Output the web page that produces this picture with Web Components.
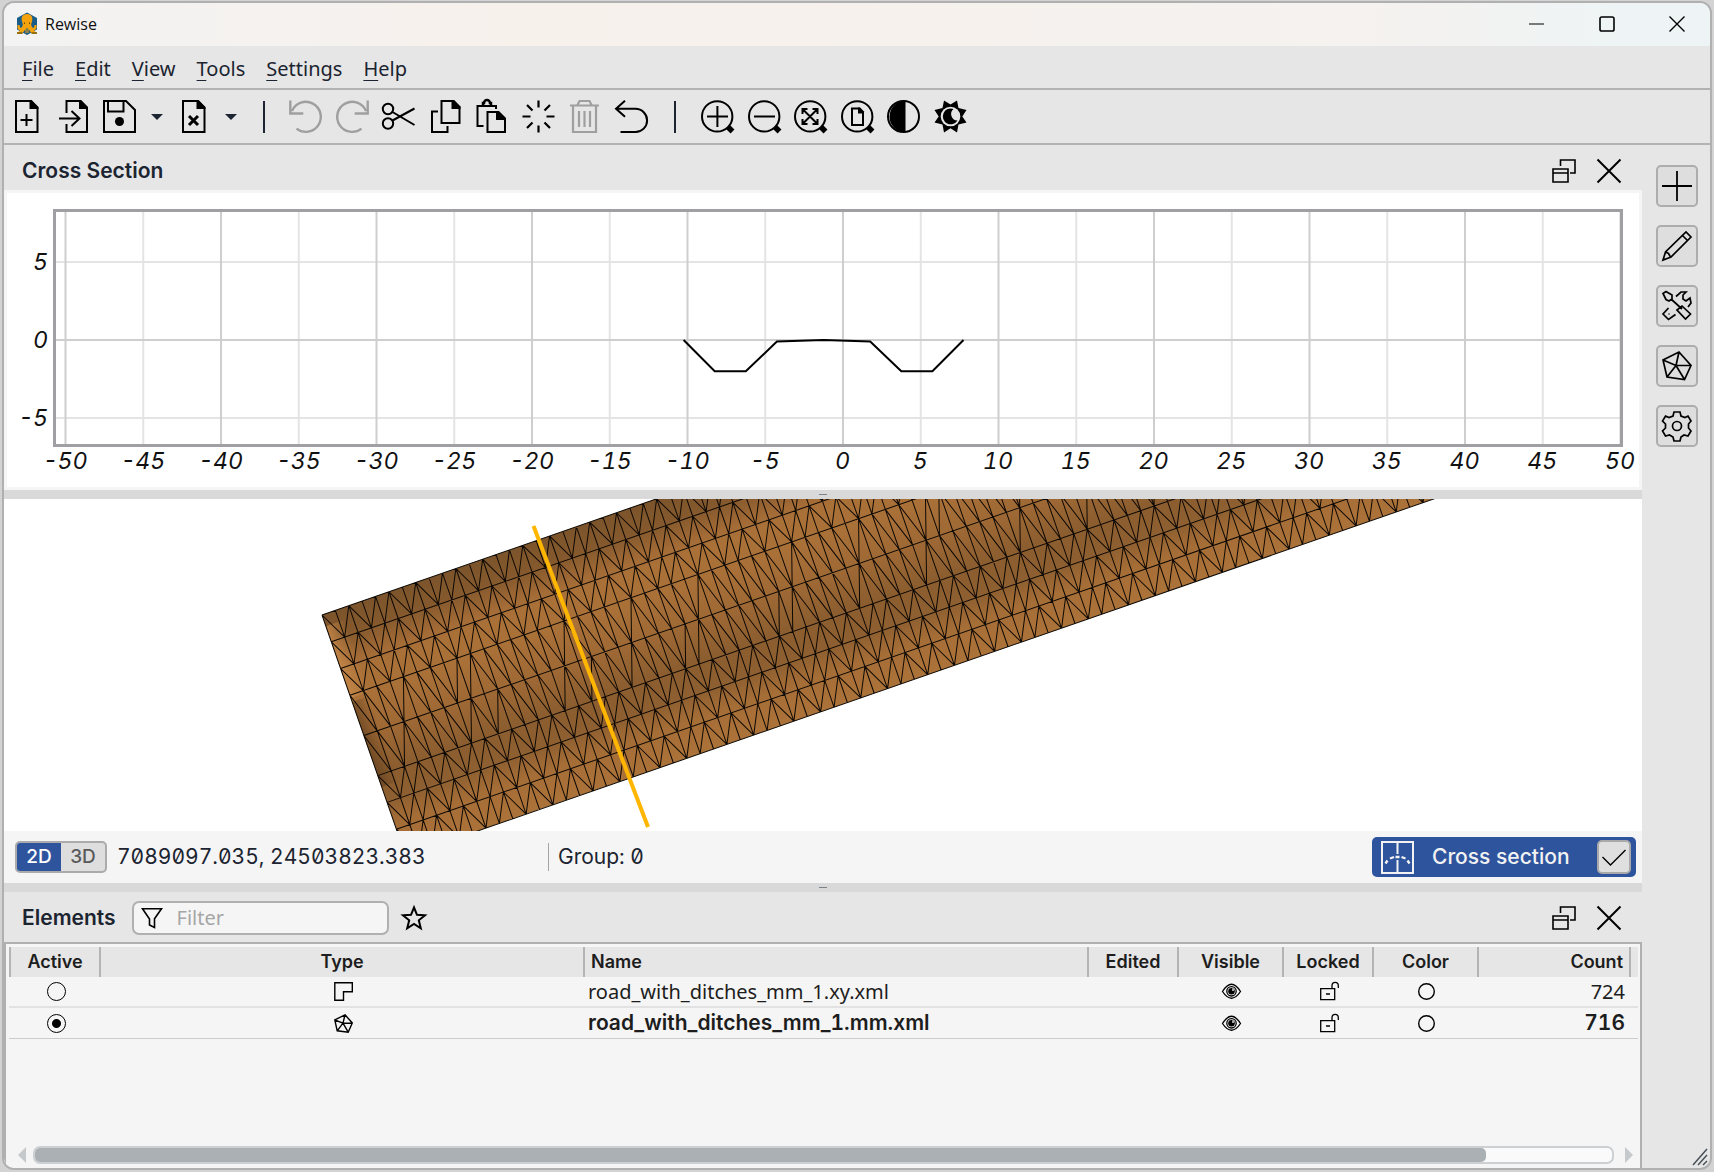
<!DOCTYPE html>
<html lang="en">
<head>
<meta charset="utf-8">
<title>Rewise</title>
<style>
html, body {
    margin: 0;
    height: 100%;
}
body {
    background: #d3d3d3;
    color: #1b2430;
    font: 21px/24px Inter, "Noto Sans", sans-serif;
}
</style>
</head>
<body>
<app-window>
    <title-bar slot="top">Rewise</title-bar>
    <menu-bar slot="top"></menu-bar>
    <tool-bar slot="top"></tool-bar>

    <dock-panel heading="Cross Section">
        <section-plot></section-plot>
    </dock-panel>
    <split-handle></split-handle>
    <mesh-view></mesh-view>
    <status-bar></status-bar>
    <split-handle></split-handle>
    <dock-panel heading="Elements">
        <filter-box slot="tools"></filter-box>
        <element-table></element-table>
    </dock-panel>

    <side-bar slot="side"></side-bar>
</app-window>

<script>
const base = `
:host, * { box-sizing: border-box; }
button {
    border: 0;
    padding: 0;
    margin: 0;
    background: none;
    color: inherit;
    font: inherit;
    display: flex;
    align-items: center;
    justify-content: center;
}
`

function define(name, style, html, setup) {
    const template = document.createElement('template')
    template.innerHTML = `<style>${base}${style}</style>${html}`
    customElements.define(name, class extends HTMLElement {
        constructor() {
            super()
            this.attachShadow({ mode: 'open' }).appendChild(template.content.cloneNode(true))
        }
        connectedCallback() {
            if (setup) setup(this, this.shadowRoot)
        }
    })
}

// [viewBox size, stroke width, markup]
const lens = '<circle cx="16.2" cy="16.4" r="15.2"/><path d="M27 27l4.500 4.500" stroke-width="5.500"/>'
const icons = {
    'new': [33, 2, '<path d="M6 1h15l6.500 7v24H6z M16.500 14v12M10.500 20h12"/><path d="M19.500 0h2l7 7v2h-9z" fill="#000" stroke="none"/>'],
    'import': [33, 2, '<path d="M9.500 13V1h14l6.500 7v24H9.500v-8 M2 18.500h20 M14.500 11l8 7.500-8 7.500"/><path d="M22 0h2l7 7v2h-9z" fill="#000" stroke="none"/>'],
    'save': [33, 2, '<path d="M1 1h22l9 9v22H1z M5 1v10.500h15.500V1"/><circle cx="16.500" cy="21.500" r="4.500" fill="#000" stroke="none"/>'],
    'close-file': [33, 2, '<path d="M6 1h15l6.500 7v24H6z"/><path d="M12 16l9 9M21 16l-9 9" stroke-width="3"/><path d="M19.500 0h2l7 7v2h-9z" fill="#000" stroke="none"/>'],
    'undo': [33, 2.4, '<path d="M7.500 28.600A15 15 0 1 0 3 11 M1.300 0.500v13h13"/>'],
    'redo': [33, 2.4, '<path d="M25.500 28.600A15 15 0 1 1 30 11 M31.700 0.500v13h-13"/>'],
    'cut': [33, 2, '<circle cx="6" cy="9" r="5.200"/><circle cx="6" cy="23.500" r="5.200"/><path d="M10.500 12L32.500 25M10.500 20.500L32.500 8.500"/>'],
    'copy': [33, 2, '<path d="M9 11.500H3V32h15.500v-6 M12.500 1h12l6 6.500v15.500h-18z"/><path d="M22.500 0h2.500l6.500 6.500v2.500h-9z" fill="#000" stroke="none"/>'],
    'paste': [33, 2, '<path d="M8.500 26H2.500V6H21v3 M12.500 12h11l6.500 6.500V32H12.500z"/><path d="M8 6V3h1a3 3 0 0 1 6 0h1v3" stroke-width="2.500"/><path d="M21 11h2.500l7 7v2H21z" fill="#000" stroke="none"/>'],
    'burst': [33, 2.2, '<path d="M16.500 0.500v7M16.500 25.500v7M0.500 16.500h8M24.500 16.500h8M5 5l5.500 5.500M28 5l-5.500 5.500M5 28l5.500-5.500M28 28l-5.500-5.500"/>'],
    'trash': [33, 2.2, '<path d="M2 5.500h29M5 6v26h23V6M9.500 5l2-4h10l2 4M11 11v16M16.500 11v16M22 11v16"/>'],
    'return': [33, 2, '<path d="M10 0.700L1 8.800l9 8 M1 8.800H20.500a11.600 11.600 0 0 1 0 23.200H5.500"/>'],
    'zoom-in': [33, 2, lens + '<path d="M6 16.500h21M16.400 6v21"/>'],
    'zoom-out': [33, 2, lens + '<path d="M6 16.500h21"/>'],
    'zoom-fit': [33, 2, lens + '<path d="M9 9.500l14 14M23 9.500l-14 14M8.500 14V9h5M18.500 9h5v5M8.500 19v5h5M23.500 19v5h-5"/>'],
    'zoom-page': [33, 2, lens + '<path d="M11 8.500h7.500l3.500 4V25H11z"/><path d="M17 7.500h2l4 4v2h-6z" fill="#000" stroke="none"/>'],
    'contrast': [33, 2, '<circle cx="16.500" cy="16.500" r="15.500"/><path d="M18.500 0.500V32.500A16 16 0 0 1 18.500 0.500z" fill="#000" stroke="none"/>'],
    'sun': [33, 0, '<path d="M10 0.500l6.500 4 6.500-4 1.500 7.500 8 2-4.200 6.500 4.200 6-8 2-1.500 8-6.500-4.200-6.500 4.200-1.500-8-8-2 4.200-6-4.200-6.500 8-2z" fill="#000"/><circle cx="16.500" cy="16.500" r="9.800" fill="#e6e6e6"/><path d="M19.500 9A7.900 7.900 0 1 0 23.500 20.500A6.500 6.500 0 0 1 19.500 9z" fill="#000"/>'],
    'restore': [24, 1.6, '<path d="M1 10h15v13H1zM1 14h15M8.500 7V1H23v13h-5"/>'],
    'close': [24, 2, '<path d="M0.500 0.500l23 23M23.500 0.500l-23 23"/>'],
    'win-min': [16, 1.2, '<path d="M0 8h15"/>'],
    'win-max': [16, 1.6, '<rect x="1" y="1" width="14" height="14" rx="1.800"/>'],
    'win-close': [16, 1.4, '<path d="M0.500 0.500l15 15M15.500 0.500l-15 15"/>'],
    'plus': [30, 1.8, '<path d="M15 0v30M0 15h30"/>'],
    'pencil': [30, 1.7, '<path d="M1 29l2.500-8L24 1l5 5L9 26zM20.500 4.500l5 5M3.500 21l3 1.500L8.500 26"/>'],
    'tools': [30, 1.7, '<path d="M1 2.500l3-2 6 3.500v4l-3 2-3-1.500zM9 8l11 10M15 19l5-4 8.500 8-5 5z M14 5.500L19 1h5l-3 3v4l3 2 4-3 1 5-3 4 M6.500 17L1 23l5.500 5.500 7-5 M6.500 23h1"/>'],
    'mesh': [30, 1.7, '<path d="M17 1L29 14.500 22.500 28.500 5 26 1 9zM14 14.500L17 1M14 14.500h15M14 14.500l8.500 14M14 14.500L5 26M14 14.500L1 9"/>'],
    'mesh-small': [19, 1.4, '<path d="M11 0.800L18.300 9 14.200 18.200 3.200 16.800 0.800 6zM9 9.200L11 0.800M9 9.200H18.300M9 9.200l5.200 9M9 9.200l-5.800 7.600M9 9.200L0.800 6"/>'],
    'gear': [30, 1.7, '<path d="M12 1h6l1 4 4 1.500 3-1.500 3 5-2.500 3v4l2.500 3-3 5-4-1-3 2-1 4h-6l-1-4-3.500-2-4 1-3-5 3-3v-4l-3-3 3-5 3.500 1.500L11 5z"/><circle cx="15" cy="15" r="4.500"/>'],
    'funnel': [20, 1.6, '<path d="M0.500 0.800h19l-7 10V19.500l-5-2.500v-6z"/>'],
    'star': [24, 2, '<path d="M12 1.500l3 7.300 8 .5-6.200 5 2 8L12 18l-6.800 4.300 2-8L1 9.300l8-.5z"/>'],
    'corner': [19, 1.4, '<path d="M0.800 0.800h17.500v9H9.500v8.500H0.800z"/>'],
    'eye': [19, 1.3, '<path d="M0.500 9.500Q9.500-5 18.500 9.500Q9.500 23 0.500 9.500z"/><circle cx="9.500" cy="9.300" r="4.700"/><circle cx="9.500" cy="9.300" r="3.300" fill="#000" stroke="none"/><path d="M11 6.500v2.500" stroke="#fff"/>'],
    'unlock': [19, 1.3, '<path d="M0.700 6.700h14v11h-14zM12 6V3.500a3 3 0 0 1 6.300 0V6M6 12h4"/>'],
    'ring': [19, 1.4, '<circle cx="9.500" cy="9.500" r="7.800"/>'],
    'tick': [24, 1.4, '<path d="M0.500 12l8 8L23.500 5"/>'],
    'section': [33, 2, '<path d="M1 1h31v31H1zM16.500 1v12M16.500 19v13"/><path d="M4.500 22.500l2-3M9 17.500l4-1.500M14.500 16h4M20.500 16l4 1.500M26.500 19.500l2 3" stroke-width="2.400"/>']
}

customElements.define('ui-icon', class extends HTMLElement {
    constructor() {
        super()
        this.attachShadow({ mode: 'open' })
    }
    connectedCallback() {
        const [size, width, body] = icons[this.getAttribute('name')]
        this.shadowRoot.innerHTML = `
        <style>
        :host { display: block; flex: none; line-height: 0; color: #000; }
        svg { overflow: visible; }
        </style>
        <svg width="${size}" height="${size}" viewBox="0 0 ${size} ${size}" fill="none"
            stroke="currentColor" stroke-width="${width}">${body}</svg>`
    }
})

define('app-window', `
:host {
    display: flex;
    min-height: 100vh;
    padding: 1px 2px 2px;
}
.frame {
    flex: 1;
    display: flex;
    flex-direction: column;
    background: #e6e6e6;
    border: 2px solid #b0b0b0;
    border-radius: 12px;
    overflow: hidden;
}
.body { flex: 1; display: flex; }
main { flex: 1; min-width: 0; display: flex; flex-direction: column; }
`, `
<div class="frame">
    <slot name="top"></slot>
    <div class="body">
        <main><slot></slot></main>
        <slot name="side"></slot>
    </div>
</div>
`)

define('title-bar', `
:host {
    display: flex;
    align-items: center;
    height: 43px;
    padding: 0 25px 2px 11px;
    background: linear-gradient(90deg, #f3f3f3, #f7f1ec 30%, #f5f2ef 80%, #eef4f5 95%);
    color: #111;
    font: 16px/24px "Open Sans", "Noto Sans", sans-serif;
}
.name { flex: 1; margin-left: 6px; }
.buttons { display: flex; gap: 54px; }
`, `
<svg width="24" height="24" viewBox="0 0 24 24" aria-hidden="true">
    <path d="M12 0.500l10 5.500v11.500l-10 5.500-10-5.500V6z" fill="#1a5c88"/>
    <path d="M12 2c5 0 6 4 5 7.500-.8 2.500-1 3-.5 4.500 1 2 2 2 2.500 1.500l.5-2.500h2c.5 3-.5 5-2.500 5.500.5 1 2 1.500 3 2v1.500h-5l-3.500-5v4h-1v-5h-1v5h-1v-4L7 22H2v-1.500c1-.5 2.500-1 3-2C3 18 2 16 2.500 13h2l.5 2.500c.5.500 1.500.500 2.500-1.500.5-1.500.3-2-.5-4.500C6 6 7 2 12 2z" fill="#f5a30c"/>
    <path d="M2 21h5.500M16.500 21H22" stroke="#3b3a1c"/>
    <path d="M9.500 10.500v1.500M14.500 10.500v1.500" stroke="#6b4306"/>
</svg>
<span class="name"><slot></slot></span>
<div class="buttons">
    <button aria-label="Minimize"><ui-icon name="win-min"></ui-icon></button>
    <button aria-label="Maximize"><ui-icon name="win-max"></ui-icon></button>
    <button aria-label="Close"><ui-icon name="win-close"></ui-icon></button>
</div>
`)

define('menu-bar', `
:host {
    display: flex;
    gap: 21px;
    height: 44px;
    padding: 3px 18px 0;
    border-bottom: 2px solid #b3b3b3;
    font: 20px/24px "Noto Sans", sans-serif;
}
u { text-underline-offset: 4px; text-decoration-thickness: 1px; }
`, `
<button><span><u>F</u>ile</span></button>
<button><span><u>E</u>dit</span></button>
<button><span><u>V</u>iew</span></button>
<button><span><u>T</u>ools</span></button>
<button><span><u>S</u>ettings</span></button>
<button><span><u>H</u>elp</span></button>
`)

const tool = (name, label, extra = '') =>
    `<button aria-label="${label}" ${extra}><ui-icon name="${name}"></ui-icon></button>`

define('tool-bar', `
:host {
    display: flex;
    align-items: center;
    height: 55px;
    padding: 0 6px;
    border-bottom: 2px solid #b3b3b3;
}
.group { display: flex; justify-content: space-between; }
.file { width: 126px; }
.edit { width: 359px; }
.zoom { width: 266px; }
.more { width: 12px; height: 32px; margin: 0 14px 0 15px; }
.more::before {
    content: "";
    border: 6px solid transparent;
    border-top-color: #1b2430;
    border-bottom: 0;
}
.line { width: 2px; height: 32px; margin: 0 25px 0 26px; background: #1b2430; }
.more + .line { margin: 0 24px 0 12px; }
button:disabled { opacity: .3; }
`, `
<div class="group file">
    ${tool('new', 'New')}${tool('import', 'Import')}${tool('save', 'Save')}
</div>
<button class="more" aria-label="Save options"></button>
${tool('close-file', 'Close file')}
<button class="more" aria-label="Close options"></button>
<div class="line"></div>
<div class="group edit">
    ${tool('undo', 'Undo', 'disabled')}${tool('redo', 'Redo', 'disabled')}
    ${tool('cut', 'Cut')}${tool('copy', 'Copy')}${tool('paste', 'Paste')}
    ${tool('burst', 'Explode')}${tool('trash', 'Delete', 'disabled')}${tool('return', 'Revert')}
</div>
<div class="line"></div>
<div class="group zoom">
    ${tool('zoom-in', 'Zoom in')}${tool('zoom-out', 'Zoom out')}
    ${tool('zoom-fit', 'Zoom to fit')}${tool('zoom-page', 'Zoom to page')}
    ${tool('contrast', 'Contrast')}${tool('sun', 'Day and night')}
</div>
`)

define('dock-panel', `
:host { display: flex; flex-direction: column; }
header {
    display: flex;
    align-items: center;
    gap: 16px;
    padding: 7px 21px 0 18px;
    min-height: 45px;
}
:host(:last-of-type) header { padding-top: 1px; }
h2 { margin: 0; font: 600 21px/24px Inter, sans-serif; }
.tools { flex: 1; }
.buttons { display: flex; gap: 21px; }
`, `
<header>
    <h2></h2>
    <div class="tools"><slot name="tools"></slot></div>
    <div class="buttons">
        ${tool('restore', 'Float')}${tool('close', 'Close panel')}
    </div>
</header>
<slot></slot>
`, (host, root) => {
    root.querySelector('h2').textContent = host.getAttribute('heading')
})

define('split-handle', `
:host {
    display: flex;
    align-items: center;
    justify-content: center;
    height: 9px;
    background: #d9d9d9;
}
i { width: 8px; height: 1px; background: #7b8288; }
`, `<i></i>`)

define('section-plot', `
:host {
    display: grid;
    grid-template-columns: 46px 1fr;
    padding: 16px 16px 12px 0;
    background: #fff;
    border: 3px solid #f5f5f5;
    color: #111;
    font: italic 23px/28px Inter, sans-serif;
    font-feature-settings: "tnum";
}
.y {
    display: flex;
    flex-direction: column;
    justify-content: space-between;
    padding: 39px 5px 15px 0;
    text-align: right;
}
.plot {
    height: 238px;
    border: 3px solid #a09fa4;
}
svg { display: block; width: 100%; height: 100%; }
path { fill: none; vector-effect: non-scaling-stroke; }
.x {
    grid-column: 2;
    display: flex;
    justify-content: space-between;
    padding: 0 3px 0 12px;
}
.x span { width: 0; display: flex; justify-content: center; }
`, `
<div class="y"><span>5</span><span>0</span><span>-5</span></div>
<div class="plot">
    <svg viewBox="0 0 1564 232" preserveAspectRatio="none" aria-label="Cross section profile">
        <path class="minor" stroke="#e4e4e4" stroke-width="2"/>
        <path class="major" stroke="#cecece" stroke-width="2"/>
        <path class="road" stroke="#000" stroke-width="2"/>
    </svg>
</div>
<div class="x"></div>
`, (host, root) => {
    const px = x => 787 + x * 15.55
    const py = y => 128 - y * 15.6
    let minor = `M0 ${py(5)}H1564M0 ${py(-5)}H1564`
    let major = `M0 ${py(0)}H1564`
    let labels = ''
    for (let x = -50; x <= 50; x += 5) {
        const line = `M${px(x)} 0V232`
        if (x % 10) minor += line
        else major += line
        labels += `<span>${x}</span>`
    }
    const profile = [[-10.25, 0], [-8.25, -2], [-6.25, -2], [-4.25, -0.1], [-1.25, 0], [1.75, -0.1], [3.75, -2], [5.75, -2], [7.75, 0]]
    root.querySelector('.minor').setAttribute('d', minor)
    root.querySelector('.major').setAttribute('d', major)
    root.querySelector('.road').setAttribute('d', 'M' + profile.map(p => px(p[0]) + ' ' + py(p[1])).join('L'))
    root.querySelector('.x').innerHTML = labels
})

define('mesh-view', `
:host { display: flex; flex: 1; min-height: 200px; background: #fff; }
.view { flex: 1; position: relative; overflow: hidden; }
svg { position: absolute; inset: 0; width: 100%; height: 100%; }
`, `
<div class="view">
<svg aria-label="Road surface mesh">
    <defs>
        <linearGradient id="across" x1="0" y1="0" x2="0" y2="255" gradientUnits="userSpaceOnUse">
            <stop offset="0" stop-color="#7c542b"/>
            <stop offset=".1" stop-color="#85592d"/>
            <stop offset=".2" stop-color="#a36b36"/>
            <stop offset=".24" stop-color="#a97038"/>
            <stop offset=".36" stop-color="#a97038"/>
            <stop offset=".5" stop-color="#9f6935"/>
            <stop offset=".66" stop-color="#8b5d2f"/>
            <stop offset=".77" stop-color="#8e5f30"/>
            <stop offset=".87" stop-color="#a66e37"/>
            <stop offset="1" stop-color="#ab7239"/>
        </linearGradient>
        <linearGradient id="lit"><stop stop-color="#c98a4a" stop-opacity=".8"/><stop offset="1" stop-color="#c98a4a" stop-opacity="0"/></linearGradient>
        <linearGradient id="shade"><stop stop-color="#5a3b1c" stop-opacity=".6"/><stop offset="1" stop-color="#5a3b1c" stop-opacity="0"/></linearGradient>
    </defs>
    <g transform="translate(318 116) rotate(-19.15)">
        <rect width="1300" height="255" fill="url(#across)"/>
        <rect y="12" width="20" height="76" fill="url(#lit)"/>
        <rect y="92" width="18" height="90" fill="url(#shade)"/>
        <path class="wire" fill="none" stroke="#0c0804" stroke-width="1"/>
    </g>
    <path d="M529.500 27L644 328" stroke="#ffb600" stroke-width="4"/>
</svg>
</div>
`, (host, root) => {
    const unit = 14.17
    // strips across the road: width in metres and the cells whose diagonal falls backwards
    const every = (...cells) => i => !cells.includes(i % 5)
    const some = (...cells) => i => cells.includes(i)
    const strips = [
        [2, every(0, 2)], [2, every(0, 2)], [2, every(0, 2)],
        [3, some(3, 7, 8, 15, 20, 25, 32, 37, 42, 43, 49, 54)],
        [3, some(2, 7, 9, 14, 16, 19, 23, 24, 30, 31, 36, 41, 48, 53, 58)],
        [2, every(0, 3)], [2, every(0, 3)], [2, every(0, 3)]
    ]
    let d = `M0 0H1300M0 0V${18 * unit}`
    let top = 0
    for (const [width, back] of strips) {
        const y1 = top * unit
        const y2 = (top + width) * unit
        d += `M0 ${y2}H1300`
        for (let i = 0; i < 90; i++) {
            const a = i * unit
            const b = a + unit
            d += `M${b} ${y1}V${y2}`
            d += back(i) ? `M${b} ${y1}L${a} ${y2}` : `M${a} ${y1}L${b} ${y2}`
        }
        top += width
    }
    root.querySelector('.wire').setAttribute('d', d)
})

define('status-bar', `
:host {
    display: flex;
    align-items: center;
    height: 52px;
    padding: 0 6px 0 11px;
    background: #f5f5f5;
}
.mode {
    display: flex;
    height: 32px;
    border: 2px solid #ababab;
    border-radius: 5px;
    background: #dedede;
    overflow: hidden;
    color: #5a5a5a;
    font: 500 19px/24px Inter, sans-serif;
}
.mode button { width: 44px; }
.mode .on { background: #2f549e; color: #fff; }
.coords, .group { font-feature-settings: "tnum", "zero"; }
.coords { width: 441px; padding-left: 10px; }
.group { flex: 1; padding-left: 9px; border-left: 1px solid #a5a5a5; line-height: 28px; }
.tool {
    display: flex;
    align-items: center;
    height: 40px;
    width: 264px;
    padding: 0 5px 0 9px;
    border-radius: 5px;
    background: #2f549e;
    color: #f2f2f2;
    font-weight: 500;
}
.tool ui-icon { color: #f2f2f2; }
.tool span { flex: 1; padding-left: 18px; }
.tool button {
    width: 34px;
    height: 34px;
    border: 2px solid #a9a9a9;
    border-radius: 5px;
    background: #dfdfdf;
}
.tool button ui-icon { color: #000; }
`, `
<div class="mode"><button class="on">2D</button><button>3D</button></div>
<div class="coords">7089097.035, 24503823.383</div>
<div class="group">Group: 0</div>
<div class="tool">
    <ui-icon name="section"></ui-icon>
    <span>Cross section</span>
    ${tool('tick', 'Accept')}
</div>
`)

define('filter-box', `
:host { display: flex; align-items: center; gap: 13px; padding: 8px 0 7px; }
label {
    display: flex;
    align-items: center;
    gap: 15px;
    width: 257px;
    height: 34px;
    padding: 0 8px;
    border: 2px solid #b0b0b0;
    border-radius: 7px;
    background: #f5f5f5;
}
input {
    flex: 1;
    min-width: 0;
    border: 0;
    padding: 0;
    outline: 0;
    background: none;
    font: 20px/24px "Noto Sans", sans-serif;
}
input::placeholder { color: #a6a6a6; }
`, `
<label>
    <ui-icon name="funnel"></ui-icon>
    <input type="text" placeholder="Filter" aria-label="Filter">
</label>
${tool('star', 'Favourites')}
`)

const row = (type, name, count, checked) => `
<tr class="${checked}">
    <td><input type="radio" name="active" aria-label="${name}" ${checked}></td>
    <td><ui-icon name="${type}"></ui-icon></td>
    <td class="name">${name}</td>
    <td></td>
    <td>${tool('eye', 'Visible')}</td>
    <td>${tool('unlock', 'Locked')}</td>
    <td>${tool('ring', 'Color')}</td>
    <td class="count">${count}</td>
    <td></td>
</tr>`

define('element-table', `
:host {
    display: flex;
    flex-direction: column;
    height: 226px;
    padding: 3px 2px 4px 3px;
    background: #f5f5f5;
    border: 2px solid #b0b0b0;
    border-bottom: 0;
    color: #1d1d1d;
}
table {
    width: 100%;
    table-layout: fixed;
    border-collapse: separate;
    border-spacing: 0;
}
th {
    height: 30px;
    padding: 0;
    background: #e6e6e6;
    border-left: 2px solid #b4b4b4;
    font: 600 18px/24px Inter, sans-serif;
}
td {
    height: 31px;
    padding: 0 0 0 4px;
    border-bottom: 2px solid #e2e2e2;
    font: 20px/24px "Noto Sans", sans-serif;
}
td ui-icon, td button { margin: 0 auto; }
td > ui-icon { width: 19px; }
th.name { text-align: left; padding-left: 6px; }
td.name { padding-left: 5px; }
th.count { text-align: right; padding-right: 6px; }
td.count { text-align: right; padding-right: 4px; }
.checked td {
    border-bottom: 1px solid #cbcbcb;
    font: 600 21px/24px Inter, sans-serif;
    font-feature-settings: "tnum";
}
input {
    appearance: none;
    display: block;
    width: 19px;
    height: 19px;
    margin: 0 auto;
    border: 1px solid #000;
    border-radius: 50%;
}
input:checked { background: radial-gradient(circle, #000 4px, transparent 5px); }
.scroll {
    display: flex;
    align-items: center;
    gap: 7px;
    margin-top: auto;
    padding: 0 5px 0 9px;
}
.scroll i { border: 8px solid transparent; border-right-color: #c6c9cc; border-left: 0; }
.scroll i:last-child { border-right: 0; border-left: 8px solid #c6c9cc; margin-left: 4px; }
.track {
    flex: 1;
    height: 18px;
    border: 2px solid #cdd0d3;
    border-radius: 7px;
    background: #fafafa;
}
.thumb { width: 92%; height: 14px; border-radius: 5px; background: #abb0b4; }
`, `
<table>
    <colgroup>
        <col style="width: 90px"><col style="width: 484px"><col>
        <col style="width: 90px"><col style="width: 105px"><col style="width: 90px">
        <col style="width: 105px"><col style="width: 152px"><col style="width: 9px">
    </colgroup>
    <thead>
        <tr>
            <th>Active</th><th>Type</th><th class="name">Name</th><th>Edited</th><th>Visible</th>
            <th>Locked</th><th>Color</th><th class="count">Count</th><th></th>
        </tr>
    </thead>
    <tbody>
        ${row('corner', 'road_with_ditches_mm_1.xy.xml', 724, '')}
        ${row('mesh-small', 'road_with_ditches_mm_1.mm.xml', 716, 'checked')}
    </tbody>
</table>
<div class="scroll" aria-hidden="true">
    <i></i><div class="track"><div class="thumb"></div></div><i></i>
</div>
`)

define('side-bar', `
:host {
    display: flex;
    flex-direction: column;
    align-items: center;
    gap: 18px;
    width: 68px;
    padding: 20px 0 0 2px;
}
button {
    width: 42px;
    height: 42px;
    border: 2px solid #adadad;
    border-radius: 5px;
    background: #dedede;
}
.grip { margin: auto 2px 2px auto; }
`, `
${tool('plus', 'Add')}${tool('pencil', 'Draw')}${tool('tools', 'Tools')}
${tool('mesh', 'Mesh')}${tool('gear', 'Settings')}
<svg class="grip" width="16" height="18" viewBox="0 0 16 18" stroke="#4a5058" stroke-width="1.500" aria-hidden="true">
    <path d="M1 17L15 1M6 17l9-10M11 17l4-4"/>
</svg>
`)
</script>
</body>
</html>
